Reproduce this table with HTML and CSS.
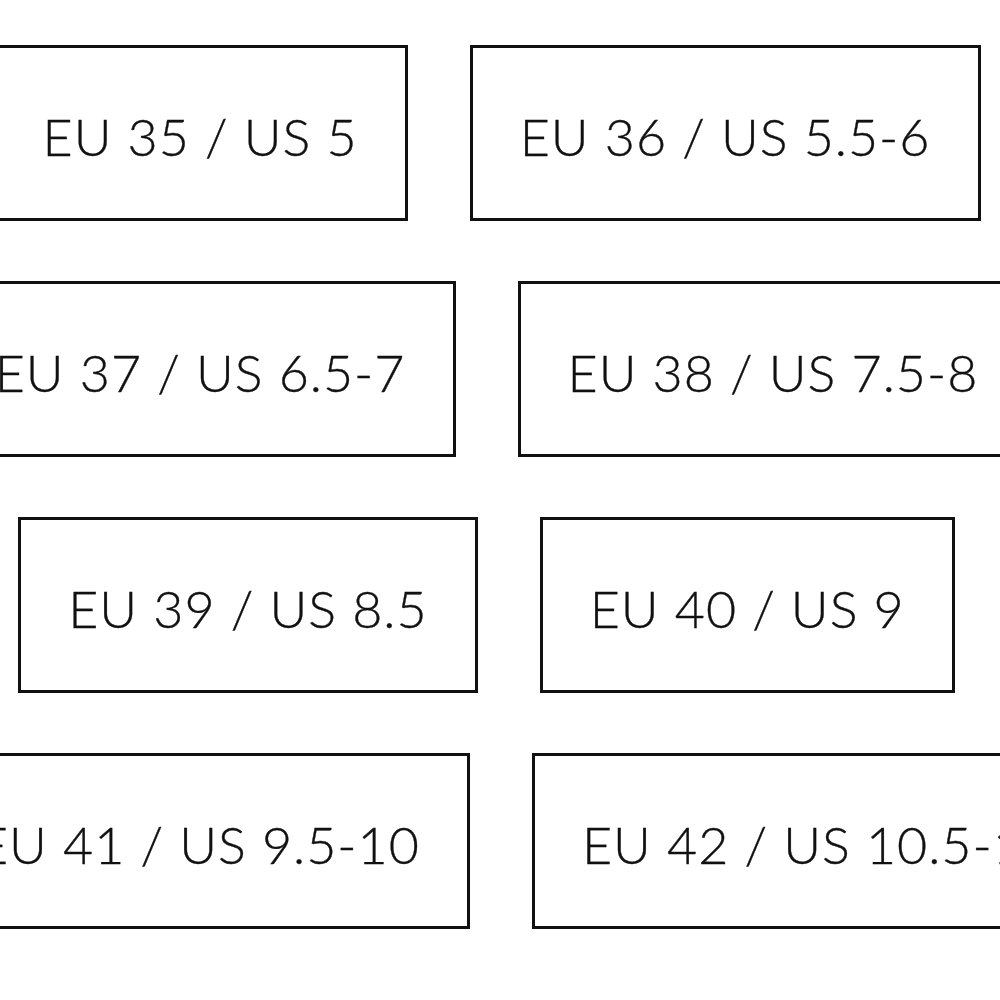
FILE: index.html
```html
<!DOCTYPE html>
<html lang="en">
<head>
<meta charset="utf-8">
<title>Sizes</title>
<link rel="stylesheet" href="styles.css">
</head>
<body>
<div class="sizes">
  <div class="row">
    <div class="size">EU 35 / US 5</div>
    <div class="size">EU 36 / US 5.5-6</div>
  </div>
  <div class="row">
    <div class="size">EU 37 / US 6.5-7</div>
    <div class="size">EU 38 / US 7.5-8</div>
  </div>
  <div class="row">
    <div class="size">EU 39 / US 8.5</div>
    <div class="size">EU 40 / US 9</div>
  </div>
  <div class="row row-wide">
    <div class="size">EU 41 / US 9.5-10</div>
    <div class="size">EU 42 / US 10.5-11</div>
  </div>
</div>
</body>
</html>
```
FILE: styles.css
```css
html, body {
  margin: 0;
  padding: 0;
  background: #fff;
  overflow: hidden;
}
.sizes {
  width: 973px;
  padding-top: 45px;
  display: flex;
  flex-direction: column;
  gap: 60px;
}
.row {
  display: flex;
  justify-content: center;
  gap: 62px;
}
.row-wide {
  margin-left: 60px;
}
.size {
  flex: none;
  box-sizing: border-box;
  height: 176px;
  border: 3px solid #111;
  padding: 6px 47px 0;
  display: flex;
  align-items: center;
  font-family: "Lato", sans-serif;
  font-weight: 300;
  font-size: 52px;
  letter-spacing: 1px;
  -webkit-text-stroke: 0.35px #111;
  color: #111;
  white-space: nowrap;
}
```
